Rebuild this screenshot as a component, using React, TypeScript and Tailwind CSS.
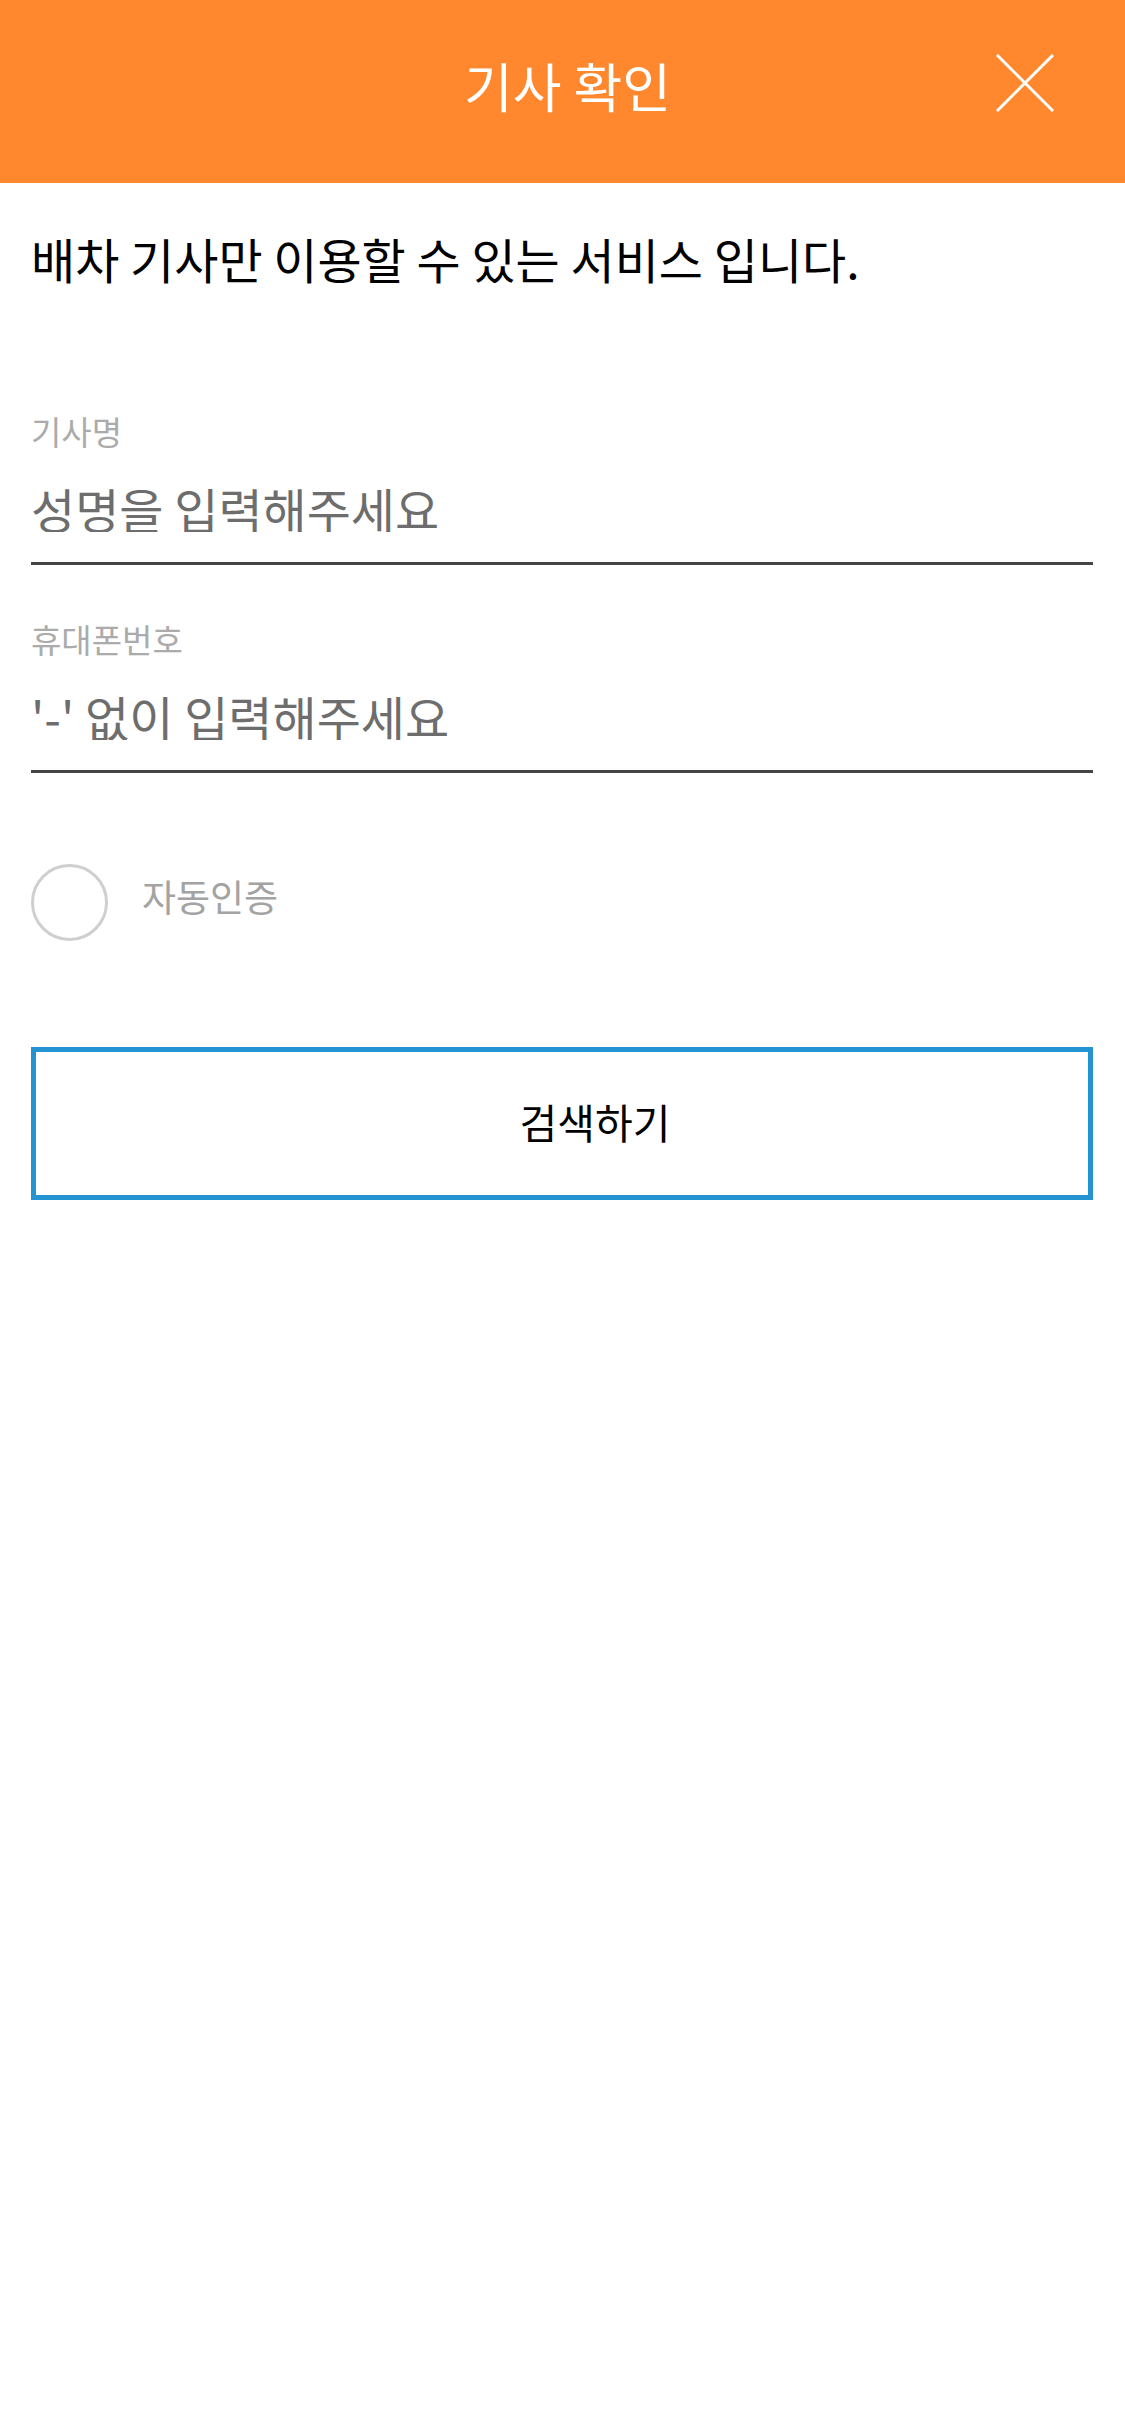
import { useState } from 'react';

const font = { fontFamily: '"Noto Sans CJK KR", "Noto Sans", sans-serif' };

function CloseIcon() {
  return (
    <svg viewBox="0 0 58 58" className="h-[58px] w-[58px]" fill="none" stroke="white" strokeWidth="3" strokeLinecap="square">
      <path d="M2 2 L56 56 M56 2 L2 56" />
    </svg>
  );
}

function Field({ label, placeholder, type = 'text' }: { label: string; placeholder: string; type?: string }) {
  return (
    <div className="flex flex-col">
      <label className="text-[33px] leading-none text-[#ababab]">{label}</label>
      <input
        type={type}
        placeholder={placeholder}
        className="mt-[36px] h-[48px] w-full bg-transparent text-[48px] leading-none text-[#333] outline-none placeholder:text-[#6d6d6d]"
        style={font}
      />
      <div className="mt-[30px] h-[3px] w-full bg-[#444]" />
    </div>
  );
}

export default function App() {
  const [auto, setAuto] = useState(false);

  return (
    <div className="min-h-[2436px] w-[1125px] bg-white" style={font}>
      <header className="grid h-[183px] grid-cols-[1fr_auto_1fr] items-center bg-[#ff882f]">
        <div />
        <h1 className="pb-[12px] pl-[10px] text-[53px] leading-none text-white">기사 확인</h1>
        <div className="flex justify-end pr-[71px]">
          <button type="button" aria-label="닫기" className="pb-[18px]">
            <CloseIcon />
          </button>
        </div>
      </header>

      <main className="px-[31px] pr-[32px]">
        <p className="mt-[51px] text-[48px] leading-none text-black">배차 기사만 이용할 수 있는 서비스 입니다.</p>

        <div className="mt-[133px] flex flex-col gap-[58px]">
          <Field label="기사명" placeholder="성명을 입력해주세요" />
          <Field label="휴대폰번호" placeholder="'-' 없이 입력해주세요" type="tel" />
        </div>

        <button
          type="button"
          onClick={() => setAuto(!auto)}
          className="mt-[91px] flex items-center gap-[34px]"
        >
          <span className="flex h-[77px] w-[77px] items-center justify-center rounded-full border-[3px] border-[#cfcfcf]">
            {auto && <span className="h-[41px] w-[41px] rounded-full bg-[#2393d1]" />}
          </span>
          <span className="pb-[12px] text-[37px] leading-none text-[#a3a3a3]">자동인증</span>
        </button>

        <button
          type="button"
          className="mt-[106px] flex h-[153px] w-full items-center justify-center border-[5px] border-[#2393d1] bg-white pb-[4px] pl-[66px] text-[41px] leading-none text-black"
        >
          검색하기
        </button>
      </main>
    </div>
  );
}
